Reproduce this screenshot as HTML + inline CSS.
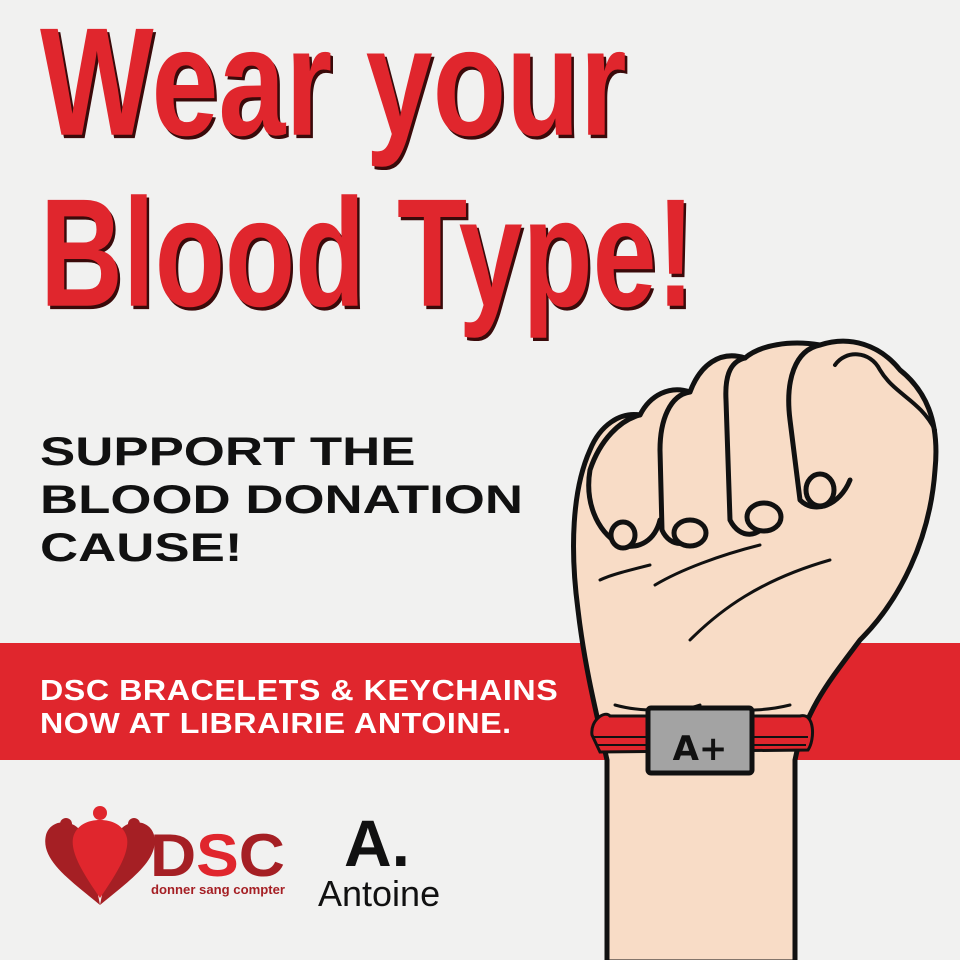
<!DOCTYPE html>
<html><head><meta charset="utf-8"><style>
body{margin:0;width:960px;height:960px;overflow:hidden;background:#f1f1f0;font-family:"Liberation Sans",sans-serif;position:relative}
.t{position:absolute;color:#e0262d;font-family:"Liberation Sans",sans-serif;font-weight:bold;font-size:140px;text-shadow:3px 3px 0 #3a0a0a;transform-origin:left top;white-space:nowrap;line-height:1}
.s{position:absolute;left:40px;font-weight:bold;font-size:40px;color:#111;line-height:48px;top:428px;transform:scaleX(1.32);transform-origin:left top;white-space:nowrap}
.band{position:absolute;left:0;top:643px;width:960px;height:117px;background:#e0262d}
.b{position:absolute;left:40px;top:675px;color:#fff;font-weight:bold;font-size:29px;line-height:33px;letter-spacing:0.5px;transform:scaleX(1.11);transform-origin:left top;white-space:nowrap}
</style></head><body>
<div class="t" style="left:40px;top:5px;transform:scale(0.86,1.1)">Wear your</div>
<div class="t" style="left:40px;top:176px;transform:scale(0.82,1.1)">Blood Type!</div>
<div class="s">SUPPORT THE<br>BLOOD DONATION<br>CAUSE!</div>
<div class="band"></div>
<div class="b">DSC BRACELETS &amp; KEYCHAINS<br>NOW AT LIBRAIRIE ANTOINE.</div>
<svg style="position:absolute;left:0;top:0" width="960" height="960" viewBox="0 0 960 960">
<g stroke="#111" stroke-width="5" stroke-linejoin="round" stroke-linecap="round" fill="#f8dcc6">
<path d="M607,962 L607,760 C598,720 585,670 578,610 C570,550 572,490 590,450 C600,425 620,412 640,415 C650,395 670,385 690,392 C700,365 720,350 745,358 C760,345 790,340 820,345 C850,335 880,345 900,370 C925,390 940,420 935,470 C930,540 900,600 860,640 C830,680 805,710 795,760 L795,962 Z"/>
<path d="M640,415 C620,420 600,440 590,470 C585,500 595,530 620,545 C640,550 655,540 660,520" fill="none"/>
<path d="M690,392 C670,395 660,420 660,450 L662,530 C670,548 690,548 700,530" fill="none"/>
<path d="M745,358 C728,362 725,380 726,400 L730,520 C740,540 760,538 768,520" fill="none"/>
<path d="M820,345 C795,350 785,380 790,420 L800,500 C815,515 840,505 850,480" fill="none"/>
<path d="M835,365 C845,350 870,350 880,370 C895,395 920,400 935,430" fill="none" stroke-width="4"/>
<path d="M655,585 C680,570 720,555 760,545 M650,565 C630,570 610,575 600,580 M690,640 C720,610 760,580 830,560" fill="none" stroke-width="3"/>
<ellipse cx="690" cy="533" rx="16" ry="13"/><ellipse cx="623" cy="535" rx="12" ry="13"/><ellipse cx="764" cy="517" rx="17" ry="14"/><ellipse cx="820" cy="490" rx="14" ry="16"/>
<path d="M615,705 C640,712 680,712 700,705 M720,708 C745,712 770,710 790,705" fill="none" stroke-width="3"/>
</g>
<g fill="#e0262d" stroke="#111" stroke-width="3">
<path d="M592,735 C590,720 605,710 610,716 L800,716 C815,712 815,740 808,750 L600,752 Z"/>
<path d="M592,737 L808,737 M596,745 L806,745" stroke-width="2"/>
</g>
<rect x="648" y="708" width="104" height="65" rx="3" fill="#a3a3a3" stroke="#111" stroke-width="5"/>
<text x="700" y="760" text-anchor="middle" font-family="DejaVu Sans,sans-serif" font-weight="bold" font-size="34" fill="#111">A+</text>
<g>
<path d="M100,905 C70,880 40,860 46,835 C50,820 70,818 80,830 C90,850 95,880 100,905Z" fill="#a51f24"/>
<path d="M100,905 C130,880 160,860 154,835 C150,820 130,818 120,830 C110,850 105,880 100,905Z" fill="#a51f24"/>
<path d="M100,898 C88,880 70,855 73,838 C76,825 88,820 100,820 C112,820 124,825 127,838 C130,855 112,880 100,898Z" fill="#e0262d"/>
<circle cx="100" cy="813" r="7" fill="#e0262d"/><circle cx="66" cy="824" r="6" fill="#a51f24"/><circle cx="134" cy="824" r="6" fill="#a51f24"/>
</g>
<text x="150" y="876" font-family="Liberation Sans,sans-serif" font-weight="bold" font-size="60" fill="#a51f24" textLength="135" lengthAdjust="spacingAndGlyphs">D<tspan fill="#e0262d">S</tspan>C</text>
<text x="151" y="894" font-family="Liberation Sans,sans-serif" font-weight="bold" font-size="12.5" fill="#a51f24" textLength="134" lengthAdjust="spacingAndGlyphs">donner sang compter</text>
<text x="344" y="866" font-family="Liberation Sans,sans-serif" font-weight="bold" font-size="66" fill="#111">A.</text>
<text x="318" y="906" font-family="Liberation Sans,sans-serif" font-size="36" fill="#111">Antoine</text>
</svg>
</body></html>
